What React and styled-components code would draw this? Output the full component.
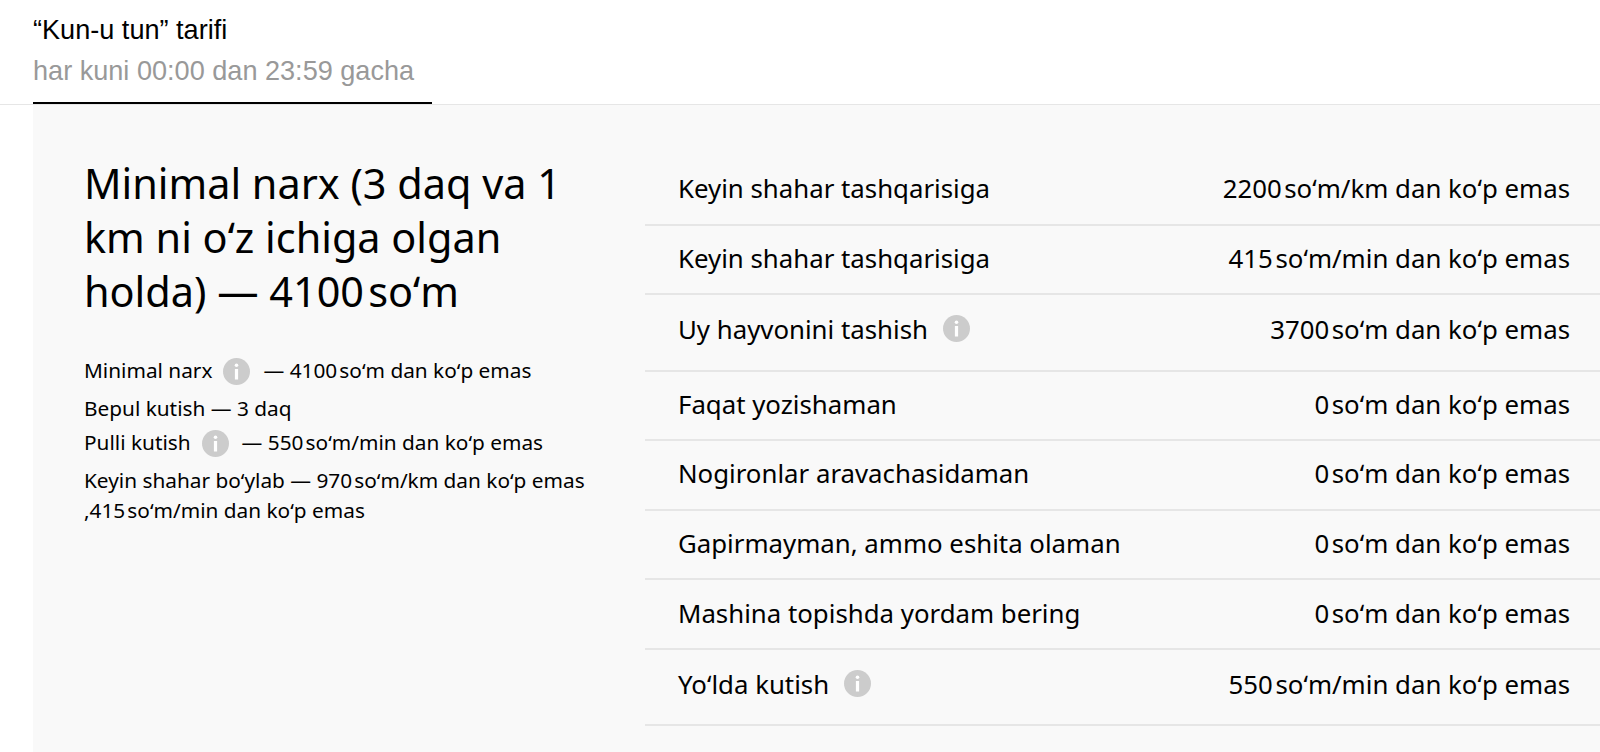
import React from 'react';
import styled, { createGlobalStyle } from 'styled-components';

const GlobalStyle = createGlobalStyle`
  html, body {
    margin: 0;
    padding: 0;
    background: #fff;
  }
  body {
    font-family: "Noto Sans", "Liberation Sans", sans-serif;
    color: #000;
    overflow: hidden;
  }
`;

const Page = styled.div`
  width: 1600px;
  height: 752px;
  overflow: hidden;
`;

const TabBar = styled.div`
  display: flex;
  height: 105px;
  padding-left: 33px;
  box-sizing: border-box;
  border-bottom: 1px solid #e6e6e6;
`;

const Tab = styled.div`
  width: 399px;
  height: 104px;
  box-sizing: border-box;
  padding-top: 8.5px;
  border-bottom: 2px solid #000;
  font-family: "Liberation Sans", Arial, sans-serif;
  font-size: 27.1px;
  line-height: 41px;
`;

const TabNote = styled.div`
  color: #999;
`;

const Panel = styled.section`
  display: flex;
  margin-left: 33px;
  height: 647px;
  padding: 51px 0 0 51px;
  box-sizing: border-box;
  background: #f9f9f9;
`;

const Summary = styled.div`
  width: 561px;
  flex: none;
`;

const Heading = styled.h2`
  width: 490px;
  margin: 0 0 37px;
  font-size: 41.4px;
  font-weight: 400;
  line-height: 54px;
`;

const SummaryLine = styled.div`
  font-size: 20.8px;
  line-height: 30px;
  margin-bottom: 4px;
  padding-bottom: ${(p) => (p.$tall ? '4px' : '0')};
  white-space: pre-line;
`;

const Rows = styled.div`
  flex: 1;
`;

const Row = styled.div`
  display: flex;
  justify-content: space-between;
  align-items: center;
  height: ${(p) => (p.$tall ? '76.4px' : '69.6px')};
  box-sizing: border-box;
  padding: 0 30px ${(p) => (p.$tall ? '7px' : '3px')} 33px;
  border-bottom: 2px solid #e6e6e6;
  font-size: 25.8px;
`;

const RowName = styled.span`
  display: flex;
  align-items: center;
`;

const Hint = styled.svg`
  flex: none;
  width: 27px;
  height: 27px;
  margin-left: 15px;
  vertical-align: -7px;
`;

const InlineHint = styled(Hint)`
  margin: 0 13px 0 11px;
`;

function InfoIcon({ as: Icon = Hint }) {
  return (
    <Icon viewBox="0 0 27 27">
      <circle cx="13.5" cy="13.5" r="13.5" fill="#ccc" />
      <rect x="11.7" y="5.5" width="3.6" height="3.6" rx="1.8" fill="#fff" />
      <rect x="11.9" y="11" width="3.2" height="10.5" fill="#fff" />
    </Icon>
  );
}

const rows = [
  { name: 'Keyin shahar tashqarisiga', price: '2200\u200asoʻm/km dan koʻp emas' },
  { name: 'Keyin shahar tashqarisiga', price: '415\u200asoʻm/min dan koʻp emas' },
  { name: 'Uy hayvonini tashish', price: '3700\u200asoʻm dan koʻp emas', hint: true },
  { name: 'Faqat yozishaman', price: '0\u200asoʻm dan koʻp emas' },
  { name: 'Nogironlar aravachasidaman', price: '0\u200asoʻm dan koʻp emas' },
  { name: 'Gapirmayman, ammo eshita olaman', price: '0\u200asoʻm dan koʻp emas' },
  { name: 'Mashina topishda yordam bering', price: '0\u200asoʻm dan koʻp emas' },
  { name: 'Yoʻlda kutish', price: '550\u200asoʻm/min dan koʻp emas', hint: true },
];

export default function App() {
  return (
    <Page>
      <GlobalStyle />
      <TabBar>
        <Tab>
          <div>“Kun-u tun” tarifi</div>
          <TabNote>har kuni 00:00 dan 23:59 gacha</TabNote>
        </Tab>
      </TabBar>
      <Panel>
        <Summary>
          <Heading>Minimal narx (3 daq va 1 km ni oʻz ichiga olgan holda) — 4100{'\u200a'}soʻm</Heading>
          <SummaryLine $tall>
            Minimal narx<InfoIcon as={InlineHint} />— 4100{'\u200a'}soʻm dan koʻp emas
          </SummaryLine>
          <SummaryLine>Bepul kutish — 3 daq</SummaryLine>
          <SummaryLine $tall>
            Pulli kutish<InfoIcon as={InlineHint} />— 550{'\u200a'}soʻm/min dan koʻp emas
          </SummaryLine>
          <SummaryLine>
            Keyin shahar boʻylab — 970{'\u200a'}soʻm/km dan koʻp emas{'\n'},415{'\u200a'}soʻm/min dan koʻp emas
          </SummaryLine>
        </Summary>
        <Rows>
          {rows.map((row, i) => (
            <Row key={i} $tall={row.hint}>
              <RowName>
                {row.name}
                {row.hint && <InfoIcon />}
              </RowName>
              <span>{row.price}</span>
            </Row>
          ))}
        </Rows>
      </Panel>
    </Page>
  );
}
